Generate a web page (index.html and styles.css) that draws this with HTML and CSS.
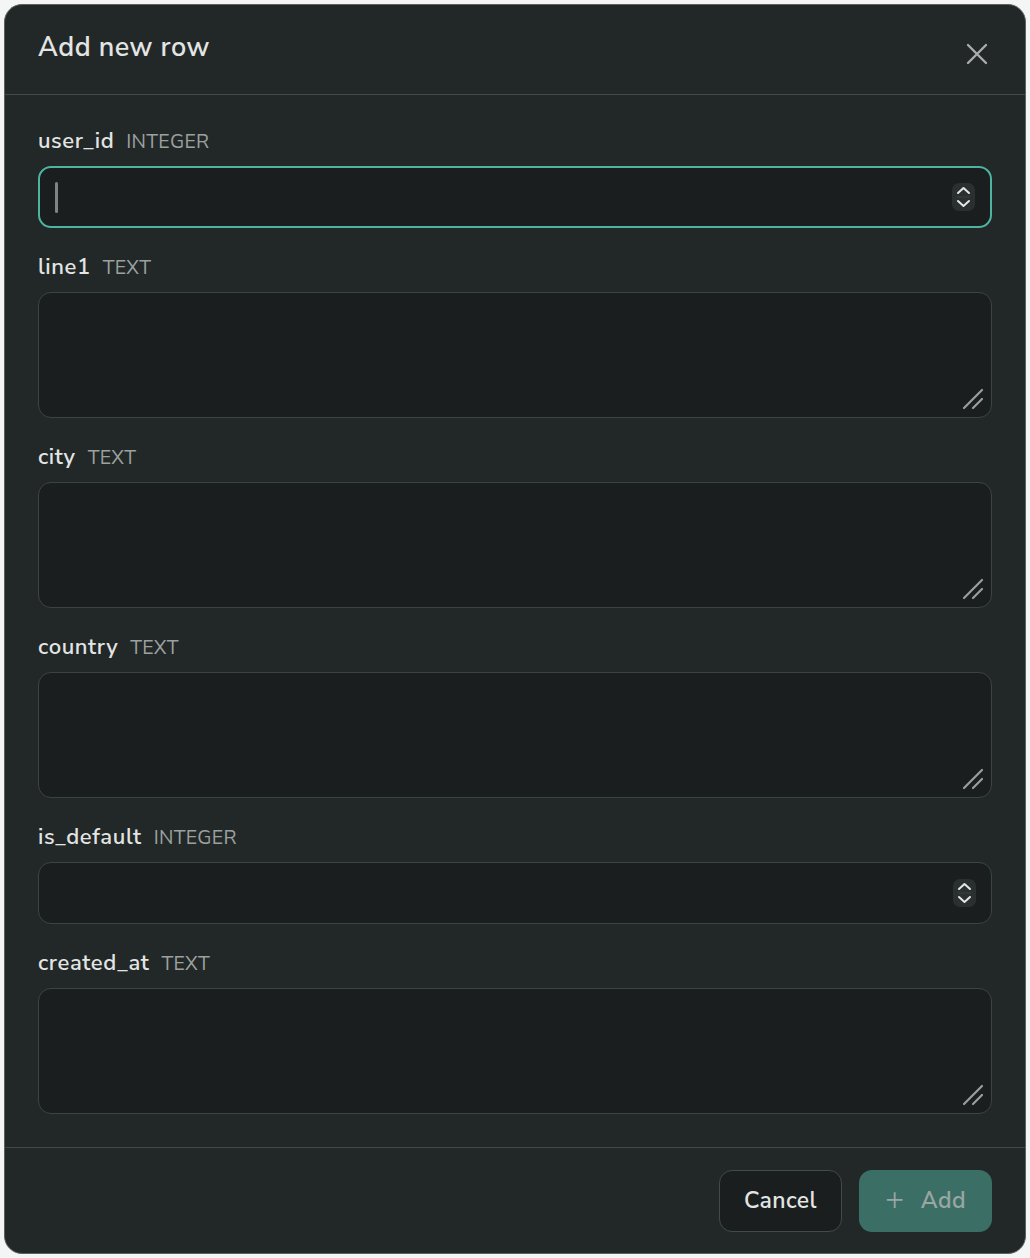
FILE: index.html
```html
<!DOCTYPE html>
<html lang="en">
<head>
<meta charset="utf-8">
<title>Add new row</title>
<link rel="stylesheet" href="styles.css">
</head>
<body>
<div class="dialog">
  <header class="dialog-header">
    <h2 class="dialog-title">Add new row</h2>
    <button class="close-btn" aria-label="Close">
      <svg width="22" height="22" viewBox="0 0 22 22"><path d="M2 2 L20 20 M20 2 L2 20" stroke="#a9adac" stroke-width="2.4" stroke-linecap="round" fill="none"/></svg>
    </button>
  </header>
  <div class="dialog-body">
    <div class="field">
      <div class="label"><span class="name">user_id</span><span class="type">INTEGER</span></div>
      <div class="input number focused">
        <span class="caret"></span>
        <span class="spacer"></span>
        <span class="spinner">
          <svg width="23" height="28" viewBox="0 0 23 28"><path d="M6 10 L11.5 5 L17 10" stroke="#e4e6e6" stroke-width="2" fill="none" stroke-linecap="round" stroke-linejoin="round"/><path d="M5 14 H18" stroke="#3a4141" stroke-width="1"/><path d="M6 18 L11.5 23 L17 18" stroke="#e4e6e6" stroke-width="2" fill="none" stroke-linecap="round" stroke-linejoin="round"/></svg>
        </span>
      </div>
    </div>
    <div class="field">
      <div class="label"><span class="name">line1</span><span class="type">TEXT</span></div>
      <div class="input textarea">
        <svg class="grip" width="22" height="22" viewBox="0 0 22 22"><path d="M2 20 L20 2 M11 20 L20 11" stroke="#9a9e9d" stroke-width="2.2" stroke-linecap="round" fill="none"/></svg>
      </div>
    </div>
    <div class="field">
      <div class="label"><span class="name">city</span><span class="type">TEXT</span></div>
      <div class="input textarea">
        <svg class="grip" width="22" height="22" viewBox="0 0 22 22"><path d="M2 20 L20 2 M11 20 L20 11" stroke="#9a9e9d" stroke-width="2.2" stroke-linecap="round" fill="none"/></svg>
      </div>
    </div>
    <div class="field">
      <div class="label"><span class="name">country</span><span class="type">TEXT</span></div>
      <div class="input textarea">
        <svg class="grip" width="22" height="22" viewBox="0 0 22 22"><path d="M2 20 L20 2 M11 20 L20 11" stroke="#9a9e9d" stroke-width="2.2" stroke-linecap="round" fill="none"/></svg>
      </div>
    </div>
    <div class="field">
      <div class="label"><span class="name">is_default</span><span class="type">INTEGER</span></div>
      <div class="input number">
        <span class="spacer"></span>
        <span class="spinner">
          <svg width="23" height="28" viewBox="0 0 23 28"><path d="M6 10 L11.5 5 L17 10" stroke="#e4e6e6" stroke-width="2" fill="none" stroke-linecap="round" stroke-linejoin="round"/><path d="M5 14 H18" stroke="#3a4141" stroke-width="1"/><path d="M6 18 L11.5 23 L17 18" stroke="#e4e6e6" stroke-width="2" fill="none" stroke-linecap="round" stroke-linejoin="round"/></svg>
        </span>
      </div>
    </div>
    <div class="field">
      <div class="label"><span class="name">created_at</span><span class="type">TEXT</span></div>
      <div class="input textarea">
        <svg class="grip" width="22" height="22" viewBox="0 0 22 22"><path d="M2 20 L20 2 M11 20 L20 11" stroke="#9a9e9d" stroke-width="2.2" stroke-linecap="round" fill="none"/></svg>
      </div>
    </div>
  </div>
  <footer class="dialog-footer">
    <button class="btn btn-cancel">Cancel</button>
    <button class="btn btn-add"><span class="plus">+</span>Add</button>
  </footer>
</div>
</body>
</html>
```
FILE: styles.css
```css
* { box-sizing: border-box; }
html, body {
  margin: 0;
  padding: 0;
  background: #f4f5f5;
}
body {
  padding: 4px;
  font-family: "Nunito Sans", Lato, "Noto Sans", sans-serif;
}
.dialog {
  width: 1022px;
  height: 1250px;
  background: #222827;
  border: 1px solid #5b6362;
  border-radius: 18px;
  display: flex;
  flex-direction: column;
  overflow: hidden;
}
.dialog-header {
  height: 90px;
  flex: none;
  display: flex;
  align-items: center;
  justify-content: space-between;
  padding: 0 33px 0 33px;
  border-bottom: 1px solid #414a49;
}
.dialog-title {
  margin: 0;
  font-size: 27px;
  font-weight: 600;
  color: #e2e5e4;
  letter-spacing: 0.5px;
  padding-bottom: 4px;
}
.close-btn {
  background: none;
  border: none;
  padding: 0;
  width: 22px;
  height: 22px;
  margin-right: 4px;
  margin-top: 8px;
  cursor: pointer;
  display: flex;
}
.dialog-body {
  flex: 1;
  padding: 33px 33px 0 33px;
  display: flex;
  flex-direction: column;
  gap: 26px;
  border-bottom: 1px solid #414a49;
}
.field {
  display: flex;
  flex-direction: column;
  gap: 12px;
}
.label {
  height: 26px;
  display: flex;
  align-items: center;
  gap: 12px;
}
.name {
  font-size: 22px;
  font-weight: 600;
  color: #e2e5e4;
  letter-spacing: 0.6px;
}
.type {
  font-size: 19.5px;
  color: #9ca1a0;
  letter-spacing: 0.3px;
}
.input {
  background: #1a1e1f;
  border: 1.5px solid #3a4543;
  border-radius: 13px;
  display: flex;
}
.input.number {
  height: 62px;
  align-items: center;
  padding: 0 15px 0 17px;
}
.input.focused {
  border: 2px solid #4fb3a1;
}
.caret {
  width: 3px;
  height: 31px;
  border-radius: 2px;
  background: #7f8483;
  margin-left: -2px;
}
.spacer { flex: 1; }
.spinner {
  width: 23px;
  height: 28px;
  border-radius: 7px;
  background: #2a3030;
  display: flex;
}
.input.textarea {
  height: 126px;
  justify-content: flex-end;
  align-items: flex-end;
  padding: 0 7px 7px 0;
}
.grip { display: block; }
.dialog-footer {
  height: 105px;
  flex: none;
  display: flex;
  justify-content: flex-end;
  align-items: center;
  gap: 17px;
  padding: 0 33px;
}
.btn {
  height: 62px;
  border-radius: 13px;
  font-family: inherit;
  font-size: 23px;
  font-weight: 600;
  letter-spacing: 0.4px;
  display: flex;
  align-items: center;
  justify-content: center;
}
.btn-cancel {
  width: 123px;
  background: #1a1e1f;
  border: 1.5px solid #414b49;
  color: #e2e5e4;
}
.btn-add {
  width: 133px;
  background: #3b6f66;
  border: none;
  color: #9aa6a3;
  gap: 16px;
}
.plus {
  font-size: 32px;
  font-weight: 300;
  line-height: 1;
  margin-top: -3px;
}
```
